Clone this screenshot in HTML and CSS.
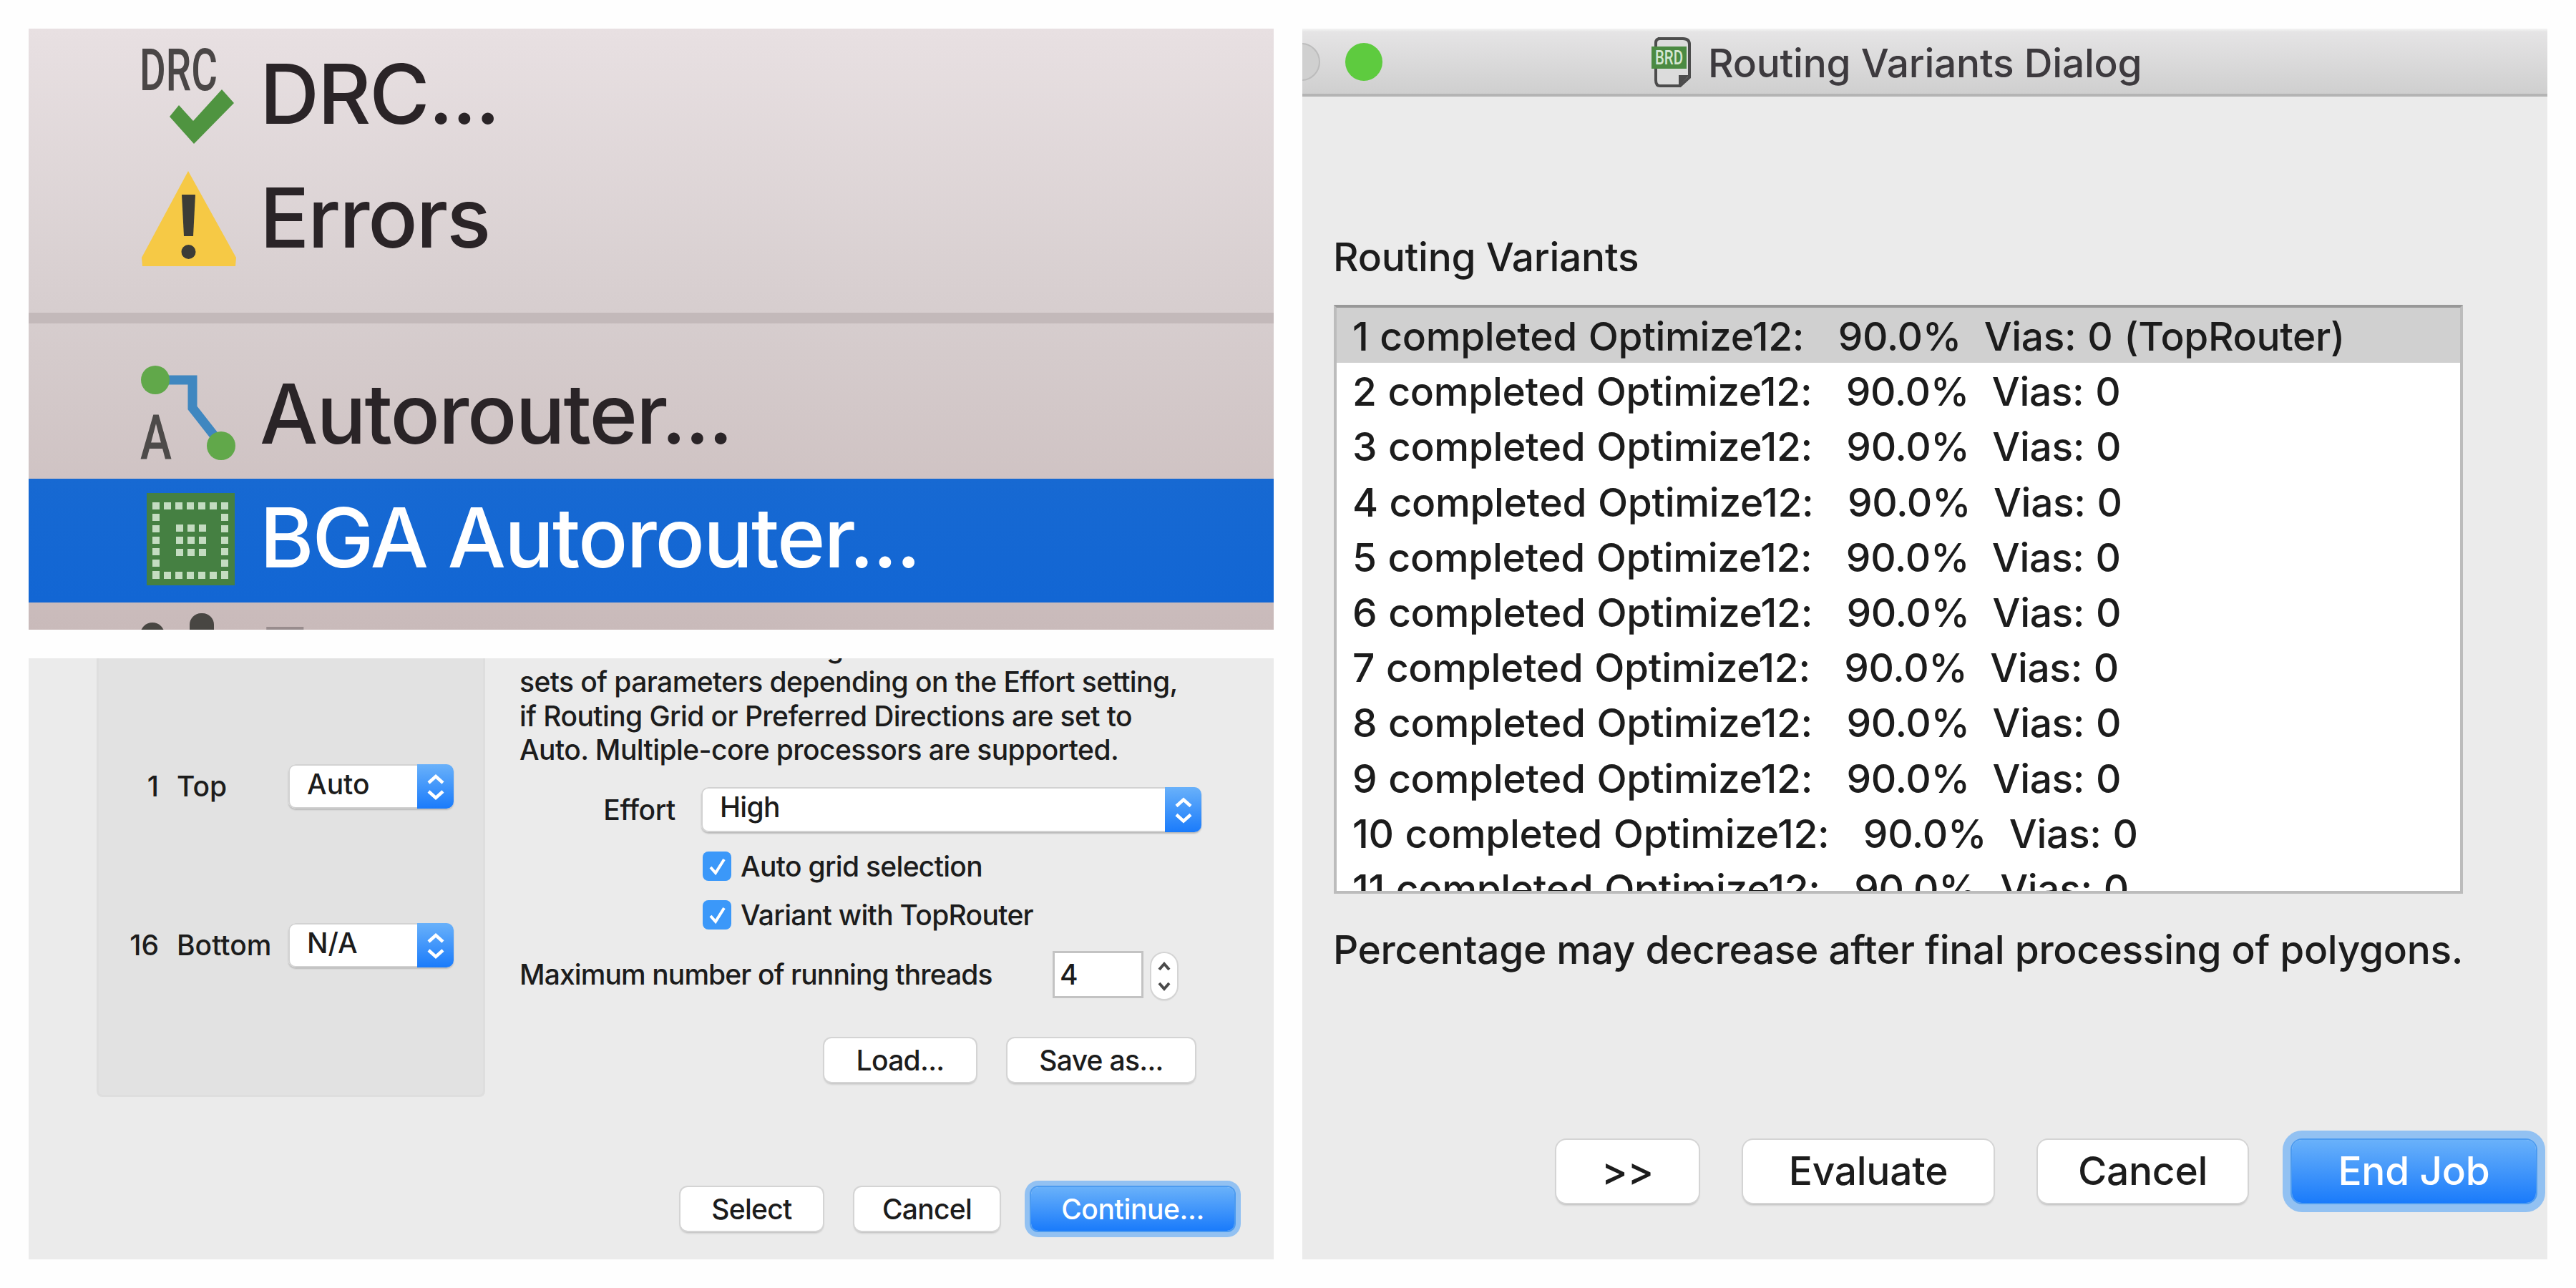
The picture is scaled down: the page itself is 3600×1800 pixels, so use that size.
FILE: index.html
```html
<!DOCTYPE html>
<html lang="en">
<head>
    <meta charset="UTF-8">
    <meta name="viewport" content="width=device-width, initial-scale=1.0">
    <title>Autorouter</title>
    <link rel="stylesheet" href="styles.css">
</head>
<body>

    <div class="column">
        <!-- Tools menu -->
        <section class="panel menu">
            <div class="menu-item">
                <svg class="menu-icon" viewBox="0 0 140 150">
                    <text x="2" y="65" font-size="82" textLength="109" lengthAdjust="spacingAndGlyphs" fill="#4a4646">DRC</text>
                    <polygon points="44,102 57,86 77,108 117,64 134,83 78,140" fill="#4f9440"/>
                </svg>
                <span>DRC...</span>
            </div>
            <div class="menu-item">
                <svg class="menu-icon" viewBox="0 0 140 150">
                    <polygon points="70,5 137,126 136,138 6,138 5,126" fill="#f6c945"/>
                    <path d="M61 38h19l-3 58h-13z" fill="#3c3c37"/>
                    <circle cx="70.500" cy="118" r="10" fill="#3c3c37"/>
                </svg>
                <span>Errors</span>
            </div>
            <div class="menu-separator"></div>
            <div class="menu-item">
                <svg class="menu-icon" viewBox="0 0 140 150">
                    <polyline points="38,23 76,23 76,62 112,108" fill="none" stroke="#3f87c0" stroke-width="13"/>
                    <circle cx="24" cy="23" r="20" fill="#61a84a"/>
                    <circle cx="116" cy="115" r="20" fill="#61a84a"/>
                    <text x="3" y="134" font-size="88" textLength="44" lengthAdjust="spacingAndGlyphs" fill="#4d4a49">A</text>
                </svg>
                <span>Autorouter...</span>
            </div>
            <div class="menu-item selected">
                <svg class="menu-icon" viewBox="0 0 140 150">
                    <rect x="12" y="8" width="123" height="129" fill="#458042"/>
                    <g stroke="#c4dcc1" stroke-width="10" stroke-dasharray="10 6">
                        <path d="M20 26H126M20 123H126M25 37V118M121 37V118"/>
                        <path d="M53 57H95M53 74H95M53 91H95"/>
                    </g>
                </svg>
                <span>BGA Autorouter...</span>
            </div>
            <div class="menu-item cut">
                <svg class="menu-icon" viewBox="0 0 140 150">
                    <circle cx="20" cy="33" r="17" fill="#484642"/>
                    <rect x="72" y="3" width="34" height="60" rx="16" fill="#484642"/>
                </svg>
                <span>F</span>
            </div>
        </section>

        <!-- Autorouter settings -->
        <section class="panel settings">
            <div class="layers">
                <div class="layer">
                    <span class="layer-number">1</span>
                    <span class="layer-name">Top</span>
                    <div class="select">
                        <span>Auto</span>
                        <svg class="arrows" viewBox="0 0 51 62"><path d="M16 26l10-9 10 9M16 38l10 9 10-9"/></svg>
                    </div>
                </div>
                <div class="layer">
                    <span class="layer-number">16</span>
                    <span class="layer-name">Bottom</span>
                    <div class="select">
                        <span>N/A</span>
                        <svg class="arrows" viewBox="0 0 51 62"><path d="M16 26l10-9 10 9M16 38l10 9 10-9"/></svg>
                    </div>
                </div>
            </div>

            <div class="options">
                <div class="scrolled-line"><span>g</span></div>
                <p class="description">sets of parameters depending on the Effort setting,<br>if Routing Grid or Preferred Directions are set to<br>Auto. Multiple-core processors are supported.</p>

                <div class="effort">
                    <span class="effort-label">Effort</span>
                    <div class="select">
                        <span>High</span>
                        <svg class="arrows" viewBox="0 0 51 62"><path d="M16 26l10-9 10 9M16 38l10 9 10-9"/></svg>
                    </div>
                </div>
                <div class="check">
                    <svg class="checkbox" viewBox="0 0 40 41"><path d="M11 22l7 8 12-19"/></svg>
                    <span>Auto grid selection</span>
                </div>
                <div class="check">
                    <svg class="checkbox" viewBox="0 0 40 41"><path d="M11 22l7 8 12-19"/></svg>
                    <span>Variant with TopRouter</span>
                </div>
                <div class="threads">
                    <span class="threads-label">Maximum number of running threads</span>
                    <div class="threads-value">4</div>
                    <svg class="stepper" viewBox="0 0 36 64"><path d="M11 23l7-8 7 8M11 42l7 8 7-8"/></svg>
                </div>
                <div class="buttons file-buttons">
                    <div class="button load">Load...</div>
                    <div class="button save">Save as...</div>
                </div>
                <div class="buttons dialog-buttons">
                    <div class="button select-button">Select</div>
                    <div class="button cancel">Cancel</div>
                    <div class="button primary continue">Continue...</div>
                </div>
            </div>
        </section>
    </div>

    <!-- Routing variants dialog -->
    <section class="panel variants">
        <div class="titlebar">
            <span class="light minimize"></span>
            <span class="light zoom"></span>
            <svg class="title-icon" viewBox="0 0 56 70">
                <path d="M9 2H44Q53 2 53 10V56L40 68H12Q6 68 6 60V8Q6 2 12 2Z" fill="#dcdcdc" stroke="#4c4c4c" stroke-width="4"/>
                <path d="M53 53H38V68Z" fill="#4c4c4c"/>
                <rect x="0" y="13" width="49" height="31" fill="#4b8a42"/>
                <text x="5" y="38" font-size="28" textLength="39" lengthAdjust="spacingAndGlyphs" fill="#d5e6d2">BRD</text>
            </svg>
            <span class="title">Routing Variants Dialog</span>
        </div>
        <div class="list-label">Routing Variants</div>
        <div class="list">
            <div class="row active">1 completed Optimize12:   90.0%  Vias: 0 (TopRouter)</div>
            <div class="row">2 completed Optimize12:   90.0%  Vias: 0</div>
            <div class="row">3 completed Optimize12:   90.0%  Vias: 0</div>
            <div class="row">4 completed Optimize12:   90.0%  Vias: 0</div>
            <div class="row">5 completed Optimize12:   90.0%  Vias: 0</div>
            <div class="row">6 completed Optimize12:   90.0%  Vias: 0</div>
            <div class="row">7 completed Optimize12:   90.0%  Vias: 0</div>
            <div class="row">8 completed Optimize12:   90.0%  Vias: 0</div>
            <div class="row">9 completed Optimize12:   90.0%  Vias: 0</div>
            <div class="row">10 completed Optimize12:   90.0%  Vias: 0</div>
            <div class="row">11 completed Optimize12:   90.0%  Vias: 0</div>
        </div>
        <div class="note">Percentage may decrease after final processing of polygons.</div>
        <div class="buttons variant-buttons">
            <div class="button more">&gt;&gt;</div>
            <div class="button evaluate">Evaluate</div>
            <div class="button cancel">Cancel</div>
            <div class="button primary end-job">End Job</div>
        </div>
    </section>

</body>
</html>
```
FILE: styles.css
```css
* {
    box-sizing: border-box;
}

html, body {
    margin: 0;
    padding: 0;
}

body {
    width: 3600px;
    height: 1800px;
    padding: 40px;
    display: flex;
    gap: 40px;
    overflow: hidden;
    background-color: #fefefe;
    font-family: Inter, "Liberation Sans", sans-serif;
    font-weight: 500;
    color: #1c1c1c;
}

.column {
    display: flex;
    flex-direction: column;
    gap: 40px;
}

.panel {
    width: 1740px;
    height: 840px;
    overflow: hidden;
    background-color: #ebebeb;
}

/* Menu */
.menu {
    padding-top: 9px;
    background: linear-gradient(#e8e0e2, #d7cecf 46%, #c9baba);
    font-size: 115px;
    letter-spacing: -0.018em;
    color: #2a2427;
}

.menu-item {
    height: 173px;
    padding-left: 153px;
    display: flex;
    align-items: center;
    gap: 30px;
}

.menu-item span {
    padding-bottom: 7px;
    line-height: 140px;
    white-space: nowrap;
}

.menu-item.selected {
    background: linear-gradient(#1769d2, #1266d4);
    color: #fff;
}

.menu-item.cut span {
    padding-bottom: 19px;
    opacity: 0.3;
}

.menu-icon {
    width: 140px;
    height: 150px;
    flex-shrink: 0;
    font-family: Roboto, sans-serif;
    letter-spacing: 0;
}

.menu-separator {
    height: 101px;
    padding: 42px 0 44px;
    background-color: #c3b9ba;
    background-clip: content-box;
}

/* Settings dialog */
.settings {
    display: flex;
    padding-left: 95px;
    font-size: 39px;
    line-height: 48px;
    letter-spacing: -0.018em;
}

.layers {
    width: 543px;
    height: 613px;
    padding-top: 148px;
    border: 3px solid #dedede;
    border-top: none;
    border-radius: 0 0 8px 8px;
    background-color: #e2e2e2;
    display: flex;
    flex-direction: column;
    gap: 160px;
}

.layer {
    display: flex;
    align-items: center;
    letter-spacing: 0;
}

.layer-number {
    width: 84px;
    text-align: right;
}

.layer-name {
    width: 156px;
    padding-left: 25px;
}

.layer .select {
    width: 231px;
    margin-left: 25px;
}

.select {
    height: 62px;
    display: flex;
    justify-content: space-between;
    border-radius: 10px;
    background-color: #fff;
    box-shadow: 0 0 0 2px #d2d2d2 inset, 0 2px 2px #b9b9b9;
}

.select span {
    padding-left: 26px;
    line-height: 56px;
}

.arrows {
    width: 51px;
    height: 100%;
    border-radius: 0 10px 10px 0;
    background: linear-gradient(#69b1fa, #1a7bfb);
    fill: none;
    stroke: #fff;
    stroke-width: 4.500;
}

.options {
    margin-left: 48px;
    width: 1054px;
}

/* Tail of the paragraph line above the fold */
.scrolled-line {
    height: 9px;
    padding-left: 429px;
    overflow: hidden;
    display: flex;
    align-items: flex-end;
}

.description {
    margin: 0 0 28px;
    line-height: 47.700px;
    letter-spacing: -0.015em;
    white-space: nowrap;
}

.effort {
    display: flex;
    align-items: center;
    margin-bottom: 27px;
}

.effort-label {
    width: 254px;
    padding-right: 36px;
    letter-spacing: -0.01em;
    text-align: right;
}

.effort .select {
    width: 699px;
    height: 63px;
}

.check {
    height: 41px;
    margin: 0 0 27px 256px;
    display: flex;
    align-items: center;
    gap: 13px;
}

.checkbox {
    width: 40px;
    height: 41px;
    border-radius: 8px;
    background-color: #3b98f9;
    fill: none;
    stroke: #fff;
    stroke-width: 4;
}

.threads {
    margin-top: 30px;
    height: 66px;
    display: flex;
    align-items: center;
}

.threads-label {
    width: 745px;
    letter-spacing: -0.023em;
    white-space: nowrap;
}

.threads-value {
    width: 127px;
    height: 66px;
    padding-left: 7px;
    border: 3px solid #c3c3c3;
    background-color: #fff;
    line-height: 60px;
}

.stepper {
    width: 36px;
    height: 64px;
    margin: 3px 0 0 11px;
    border-radius: 18px;
    background-color: #fff;
    box-shadow: 0 0 0 2px #d4d4d4, 0 2px 2px #b9b9b9;
    fill: none;
    stroke: #4a4a4a;
    stroke-width: 4;
}

/* Buttons */
.buttons {
    display: flex;
}

.button {
    border-radius: 10px;
    background-color: #fff;
    box-shadow: 0 0 0 2px #d4d4d4, 0 3px 3px #b5b5b5;
    text-align: center;
    white-space: nowrap;
}

.button.primary {
    background: linear-gradient(#69b1fa, #1a7bfb);
    color: #fff;
}

.settings .button {
    height: 61px;
    line-height: 61px;
}

.settings .button.primary {
    box-shadow: 0 0 0 2px #4c9bf0, 0 0 0 9px #92c1f2;
}

.file-buttons {
    margin-top: 56px;
    padding-left: 426px;
    gap: 44px;
}

.load {
    width: 212px;
}

.save {
    width: 262px;
}

.dialog-buttons {
    margin-top: 147px;
    padding-left: 225px;
    gap: 44px;
}

.select-button {
    width: 199px;
}

.settings .cancel {
    width: 203px;
}

.continue {
    width: 284px;
    letter-spacing: -0.01em;
}

/* Routing variants dialog */
.variants {
    height: 1720px;
    font-size: 55px;
    line-height: 60px;
    letter-spacing: -0.004em;
}

.titlebar {
    height: 95px;
    padding-top: 2px;
    border-bottom: 4px solid #b4b4b4;
    background: linear-gradient(#f4f4f4, #e5e4e5 5%, #cfcfcf);
    display: flex;
    align-items: center;
    color: #3d3a3e;
}

.light {
    width: 52px;
    height: 53px;
    border-radius: 50%;
}

.minimize {
    margin-left: -27px;
    border: 2px solid #bcbcbc;
    background-color: #d0d0d0;
}

.zoom {
    margin-left: 35px;
    background-color: #5ecb3f;
}

.title-icon {
    width: 56px;
    height: 70px;
    margin-left: 376px;
    font-family: Roboto, sans-serif;
    letter-spacing: 0;
}

.title {
    margin-left: 23px;
    padding-top: 2px;
}

.list-label {
    margin: 194px 0 37px 43px;
}

.list {
    width: 1578px;
    height: 823px;
    margin-left: 44px;
    overflow: hidden;
    border: 4px solid #bcbcbc;
    border-top-color: #989898;
    background-color: #fff;
}

.row {
    height: 77.200px;
    padding-left: 22px;
    line-height: 80px;
    letter-spacing: -0.006em;
    word-spacing: 1.500px;
    white-space: pre;
}

.row.active {
    background-color: #d0d0d0;
}

.note {
    margin: 48px 0 236px 43px;
    letter-spacing: -0.006em;
    white-space: nowrap;
}

.variant-buttons {
    padding-left: 355px;
    gap: 62px;
}

.variants .button {
    height: 88px;
    border-radius: 14px;
    line-height: 87px;
}

.variants .button.primary {
    box-shadow: 0 0 0 2px #4c9bf0, 0 0 0 13px #92c1f2;
}

.more {
    width: 199px;
}

.evaluate {
    width: 350px;
}

.variants .cancel {
    width: 293px;
}

.end-job {
    width: 341px;
}
```
